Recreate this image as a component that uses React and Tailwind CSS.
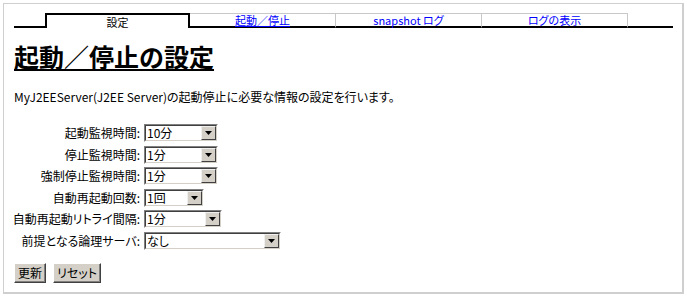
import React from "react";

const tabs = [
  { label: "起動／停止", underline: true },
  { label: "snapshot ログ", underline: false },
  { label: "ログの表示", underline: false },
];

const rows = [
  { label: "起動監視時間:", value: "10分", w: "w-[74px]" },
  { label: "停止監視時間:", value: "1分", w: "w-[74px]" },
  { label: "強制停止監視時間:", value: "1分", w: "w-[74px]" },
  { label: "自動再起動回数:", value: "1回", w: "w-[60px]" },
  { label: "自動再起動リトライ間隔:", value: "1分", w: "w-[78px]" },
  { label: "前提となる論理サーバ:", value: "なし", w: "w-[137px]" },
];

function Select({ value, w }) {
  return (
    <div className={`${w} h-[18px] border border-t-[#808080] border-l-[#808080] border-b-white border-r-white`}>
      <div className="flex h-full border border-t-[#404040] border-l-[#404040] border-b-[#d4d0c8] border-r-[#d4d0c8] bg-white">
        <span className="flex-1 pl-[1px] text-[12px] leading-[14px]">{value}</span>
        <div className="flex w-[15px] items-center justify-center border border-t-[#f0f0f0] border-l-[#f0f0f0] border-b-[#404040] border-r-[#404040] bg-[#d4d0c8]">
          <svg width="7" height="4" viewBox="0 0 7 4">
            <path d="M0 0h7L3.5 4z" fill="#000" />
          </svg>
        </div>
      </div>
    </div>
  );
}

function Button({ children, w }) {
  return (
    <button className={`${w} h-[20px] border border-t-white border-l-white border-b-[#404040] border-r-[#404040] bg-[#d4d0c8] text-[12px] leading-none shadow-[inset_-1px_-1px_0_#808080]`}>
      {children}
    </button>
  );
}

export default function App() {
  return (
    <div className="h-[297px] w-[687px] bg-white p-[3px] text-black [font-family:'Noto_Sans_CJK_JP',sans-serif] [font-feature-settings:'palt']">
      <div className="h-[291px] w-[681px] border border-r-2 border-b-2 border-[#cfcfcf] pl-[10px] pt-[9px]">
        {/* tab bar */}
        <div className="flex h-[15px] w-[659px] text-[11px] leading-[12px]">
          <div className="w-[31px] border-b-2 border-black" />
          <div className="flex w-[145px] items-center justify-center border-l-2 border-r-2 border-t-2 border-black">
            設定
          </div>
          {tabs.map((t) => (
            <div
              key={t.label}
              className="flex w-[146px] items-center justify-center border-b-2 border-r border-t border-b-black border-r-[#c8c8c8] border-t-[#c8c8c8] text-[#0000ff]"
            >
              <span className={t.underline ? "underline" : ""}>{t.label}</span>
            </div>
          ))}
          <div className="flex-1 border-b-2 border-black" />
        </div>

        <h1 className="mt-[13px] text-[25px] font-bold leading-[30px] underline decoration-2 underline-offset-2 [font-feature-settings:normal]">
          起動／停止の設定
        </h1>

        <p className="mt-[19px] text-[12px] leading-[14px]">
          MyJ2EEServer(J2EE Server)の起動停止に必要な情報の設定を行います。
        </p>

        <div className="mt-[20px] flex flex-col gap-[3.6px]">
          {rows.map((r) => (
            <div key={r.label} className="flex items-center">
              <div className="flex w-[130px] justify-end pr-[4px]">
                <span className="whitespace-nowrap text-[12px] leading-[14px]">
                  {r.label}
                </span>
              </div>
              <Select value={r.value} w={r.w} />
            </div>
          ))}
        </div>

        <div className="mt-[13px] flex gap-[7px]">
          <Button w="w-[32px]">更新</Button>
          <Button w="w-[48px]">リセット</Button>
        </div>
      </div>
    </div>
  );
}
